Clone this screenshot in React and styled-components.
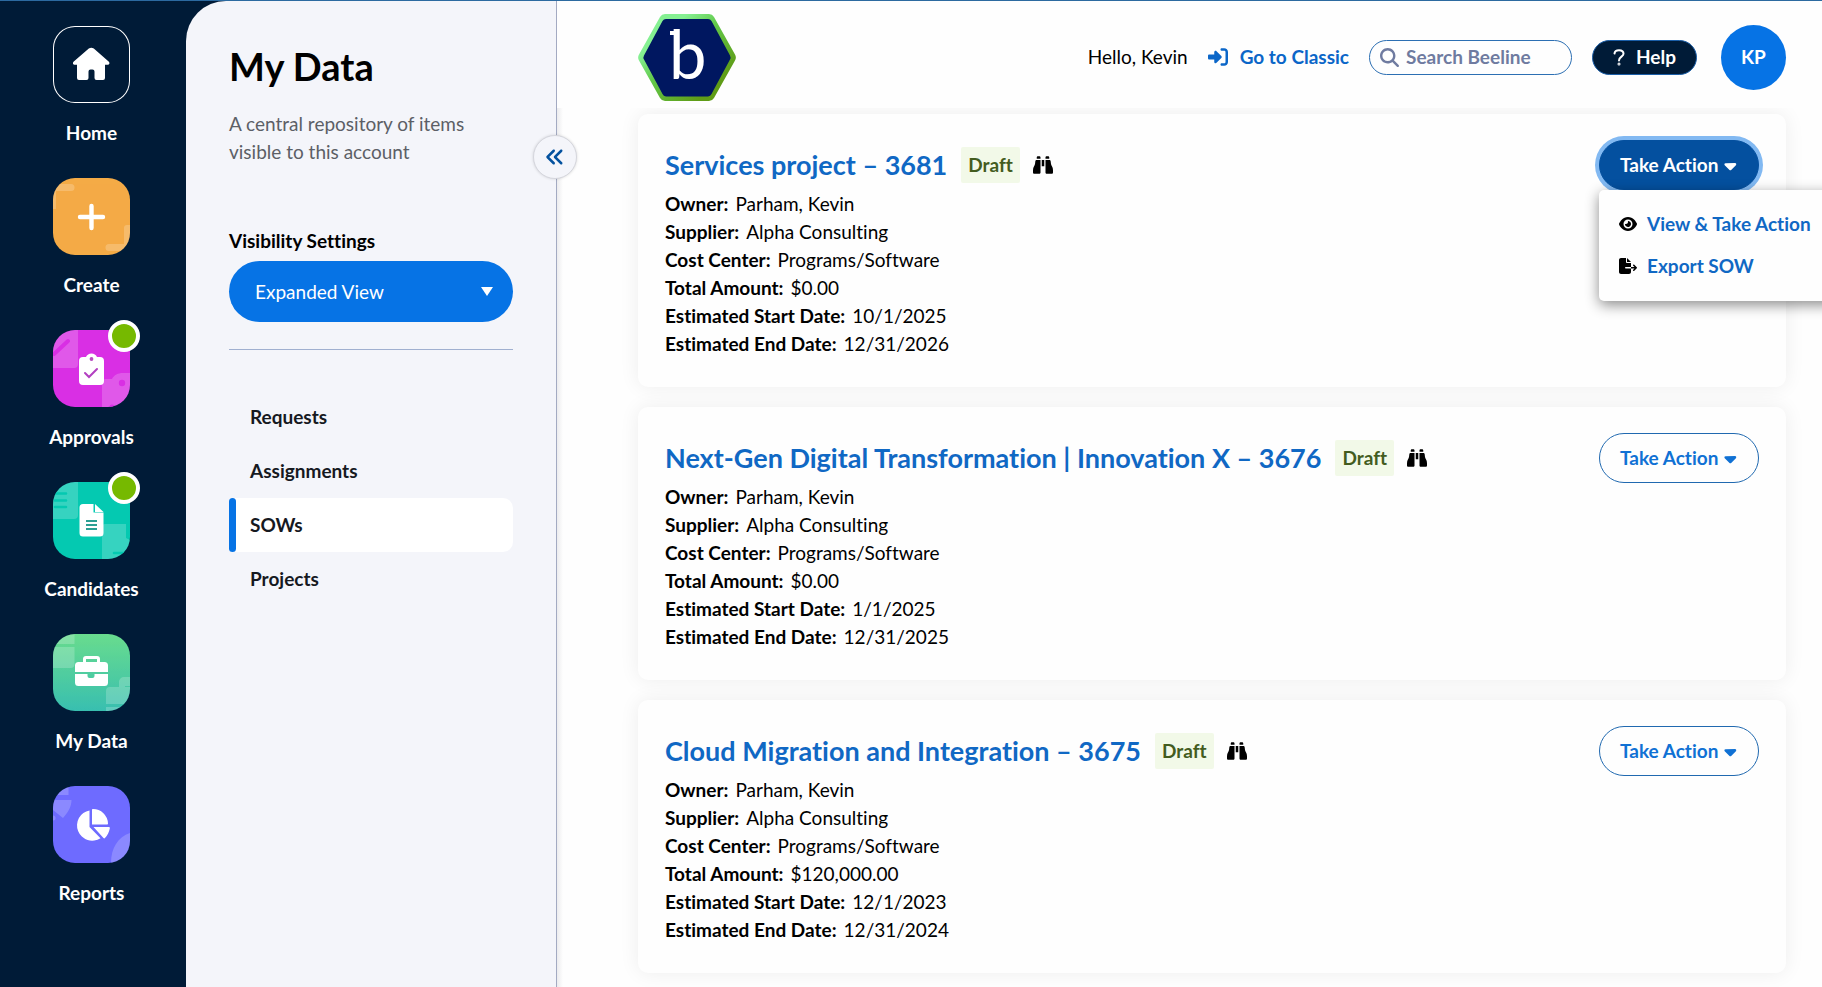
import React from 'react'
import styled, { createGlobalStyle, css } from 'styled-components'
import {
    FaAnglesLeft,
    FaBinoculars,
    FaCaretDown,
    FaEye,
    FaFileExport,
    FaMagnifyingGlass,
    FaRightToBracket,
} from 'react-icons/fa6'

const sections = ['Requests', 'Assignments', 'SOWs', 'Projects']

const sows = [
    {
        id: 3681,
        title: 'Services project – 3681',
        amount: '$0.00',
        start: '10/1/2025',
        end: '12/31/2026',
        open: true,
    },
    {
        id: 3676,
        title: 'Next-Gen Digital Transformation | Innovation X – 3676',
        amount: '$0.00',
        start: '1/1/2025',
        end: '12/31/2025',
    },
    {
        id: 3675,
        title: 'Cloud Migration and Integration – 3675',
        amount: '$120,000.00',
        start: '12/1/2023',
        end: '12/31/2024',
    },
]

const HomeIcon = () => (
    <svg viewBox="0 0 77 77">
        <path fill="#fff" d="M35.8 22.6a4.2 4.2 0 0 1 5 0L55.6 35.4c1.6 1.5.8 3.4-1.2 3.4H52V52a2 2 0 0 1-2 2h-6.500a2 2 0 0 1-2-2v-6.500a2 2 0 0 0-2-2h-2a2 2 0 0 0-2 2V52a2 2 0 0 1-2 2H26a2 2 0 0 1-2-2V38.800h-2c-2 0-2.800-1.900-1.200-3.400z" />
    </svg>
)

const CreateIcon = () => (
    <svg viewBox="0 0 77 77">
        <g fill="#fff" opacity="0.2">
            <path d="M0 6h18a3.500 3.500 0 0 1 0 7H3v18H0z" />
            <path d="M77 47h-3a3 3 0 0 0-3 3v16H56a3.500 3.500 0 0 0 0 7h21z" />
        </g>
        <path d="M38.500 28v22M27 39h23" stroke="#fff" strokeWidth="4.400" strokeLinecap="round" />
    </svg>
)

const ApprovalsIcon = () => (
    <svg viewBox="0 0 77 77">
        <path fill="#fff" opacity="0.2" d="M0 0h25v34a4 4 0 0 1-4 4H0z" />
        <path d="M1 24l14-13" stroke="#d92fe4" strokeWidth="4" strokeLinecap="round" />
        <path fill="#fff" opacity="0.2" d="M49 77V53a4 4 0 0 1 4-4h6c2-4 6-6 11-6h7v34z" />
        <circle cx="69" cy="53" r="3.200" fill="#d92fe4" />
        <circle cx="59" cy="77" r="2.500" fill="#d92fe4" />
        <path fill="#fff" d="M30 27h3a6 6 0 0 1 11 0h3a4 4 0 0 1 4 4v20a4 4 0 0 1-4 4H30a4 4 0 0 1-4-4V31a4 4 0 0 1 4-4z" />
        <circle cx="38.500" cy="29" r="1.900" fill="#b84bc0" />
        <path d="M32 43l4 4 8-8" fill="none" stroke="#b23fc0" strokeWidth="2" strokeLinecap="round" />
    </svg>
)

const CandidatesIcon = () => (
    <svg viewBox="0 0 77 77">
        <path fill="#fff" opacity="0.2" d="M0 0h25v33a4 4 0 0 1-4 4H0z" />
        <path d="M2 11.500h11M2 18.500h11M2 25h11" stroke="#04c9b1" strokeWidth="2.600" strokeLinecap="round" />
        <path fill="#fff" opacity="0.2" d="M49 77V45a3 3 0 0 1 3-3h21v14l4 2v19z" />
        <path d="M61 71h12" stroke="#04c9b1" strokeWidth="2.600" strokeLinecap="round" />
        <path fill="#fff" d="M30 22h10.500v8.500h10V51a3.500 3.500 0 0 1-3.500 3.500H30a3.500 3.500 0 0 1-3.500-3.500V25.500A3.500 3.500 0 0 1 30 22z" />
        <path fill="#fff" d="M42 22l8.500 8H42z" />
        <path d="M33 39h11M33 43h11M33 47h11" stroke="#2b9f94" strokeWidth="1.800" />
    </svg>
)

const MyDataIcon = () => (
    <svg viewBox="0 0 77 77">
        <g fill="#fff" opacity="0.2">
            <path d="M0 0h21.500v10H0zM0 13h21.500v17a4 4 0 0 1-4 4H0z" />
            <path d="M53 70V57a4 4 0 0 1 4-4h9v-5a5 5 0 0 1 5-5h6v9h-5v1h5v17zM53 73h24v4H53z" />
        </g>
        <path fill="#fff" fillRule="evenodd" d="M30 28v-3a3 3 0 0 1 3-3h11a3 3 0 0 1 3 3v3h4.500a3.500 3.500 0 0 1 3.500 3.500V38H22v-6.500a3.500 3.500 0 0 1 3.500-3.500zM33 28h11v-3H33z" />
        <path fill="#fff" d="M22 40h12.500v2a2 2 0 0 0 2 2h3a2 2 0 0 0 2-2v-2H55v8.500a3.500 3.500 0 0 1-3.500 3.500h-26a3.500 3.500 0 0 1-3.500-3.500z" />
    </svg>
)

const ReportsIcon = () => (
    <svg viewBox="0 0 77 77">
        <g fill="#fff" opacity="0.2">
            <path d="M0 0h15.500v9H0zM0 14h18.500c0 7-4 13-8.500 18L0 24z" />
            <circle cx="0" cy="32" r="2.500" />
            <path d="M77 47v30H58c0-15 7-26 19-30z" />
        </g>
        <path fill="#fff" d="M36.500 24.500v16.500l11 11.200A15.200 15.200 0 1 1 36.500 24.500z" />
        <path fill="#fff" d="M39 24c0-.6.400-1 1-1a15 15 0 0 1 15 14.500c0 .6-.4 1-1 1H39z" />
        <path fill="#fff" d="M40.500 41H55.800c.8 0 1.200.6 1 1.400-.8 3.600-2.400 7-4.800 9.600-.5.600-1 .6-1.500 0z" />
    </svg>
)

const navItems = [
    { label: 'Home', icon: HomeIcon, fill: 'transparent', outlined: true },
    { label: 'Create', icon: CreateIcon, fill: '#f4ab46' },
    { label: 'Approvals', icon: ApprovalsIcon, fill: '#d92fe4', alert: true },
    { label: 'Candidates', icon: CandidatesIcon, fill: '#04c9b1', alert: true },
    { label: 'My Data', icon: MyDataIcon, fill: 'linear-gradient(#69dc8e, #39bfb0)' },
    { label: 'Reports', icon: ReportsIcon, fill: '#6e6cff' },
]

const BeelineLogo = () => (
    <svg width="98" height="87" viewBox="0 0 98 87" role="img" aria-label="Beeline">
        <defs>
            <linearGradient id="rim" x1="0" y1="0" x2="1" y2="1">
                <stop offset="0.250" stopColor="#85f092" />
                <stop offset="0.450" stopColor="#62c94a" />
                <stop offset="0.800" stopColor="#5f9c17" />
            </linearGradient>
        </defs>
        <path fill="url(#rim)" d="M27 0h44a6 6 0 0 1 5 3l21 37.500a6 6 0 0 1 0 6L76 84a6 6 0 0 1-5 3H27a6 6 0 0 1-5-3L1 46.500a6 6 0 0 1 0-6L22 3a6 6 0 0 1 5-3z" />
        <path fill="#001760" d="M28 5h42a4 4 0 0 1 3.500 2l18.500 34.500a4 4 0 0 1 0 4L73.500 80a4 4 0 0 1-3.500 2.500H28a4 4 0 0 1-3.500-2.500L6 45.500a4 4 0 0 1 0-4L24.500 7A4 4 0 0 1 28 5z" />
        <rect x="32" y="17" width="7" height="4" fill="#fff" />
        <LogoLetter x="31" y="65">b</LogoLetter>
    </svg>
)

const SowCard = ({ sow }) => (
    <Card>
        <CardTop>
            <CardTitle href="#">{sow.title}</CardTitle>
            <Status>Draft</Status>
            <IconButton aria-label="Preview"><FaBinoculars size={20} /></IconButton>
            <ActionWrap>
                <ActionButton $open={sow.open} aria-expanded={!!sow.open}>
                    Take Action <FaCaretDown size={19} />
                </ActionButton>
                {sow.open && (
                    <Menu>
                        <MenuLink href="#"><FaEye size={18} />View &amp; Take Action</MenuLink>
                        <MenuLink href="#"><FaFileExport size={18} />Export SOW</MenuLink>
                    </Menu>
                )}
            </ActionWrap>
        </CardTop>
        <Details>
            <Detail><dt>Owner:</dt><dd>Parham, Kevin</dd></Detail>
            <Detail><dt>Supplier:</dt><dd>Alpha Consulting</dd></Detail>
            <Detail><dt>Cost Center:</dt><dd>Programs/Software</dd></Detail>
            <Detail><dt>Total Amount:</dt><dd>{sow.amount}</dd></Detail>
            <Detail><dt>Estimated Start Date:</dt><dd>{sow.start}</dd></Detail>
            <Detail><dt>Estimated End Date:</dt><dd>{sow.end}</dd></Detail>
        </Details>
    </Card>
)

const App = () => {
    return (
        <>
            <GlobalStyle />
            <Container>
                <NavRail>
                    {navItems.map(({ label, icon: Icon, fill, outlined, alert }) => (
                        <NavItem href="#" key={label}>
                            <TileWrap>
                                <Tile $fill={fill} $outlined={outlined}><Icon /></Tile>
                                {alert && <Dot />}
                            </TileWrap>
                            {label}
                        </NavItem>
                    ))}
                </NavRail>
                <Sidebar>
                    <Heading>My Data</Heading>
                    <Intro>A central repository of items visible to this account</Intro>
                    <SettingLabel htmlFor="visibility">Visibility Settings</SettingLabel>
                    <SelectWrap>
                        <Select id="visibility" defaultValue="expanded">
                            <option value="expanded">Expanded View</option>
                        </Select>
                        <Arrow viewBox="0 0 12 9"><path d="M0 0h12L6 9z" /></Arrow>
                    </SelectWrap>
                    <Divider />
                    <SectionList>
                        {sections.map((name) => (
                            <SectionLink href="#" key={name} $active={name === 'SOWs'}>{name}</SectionLink>
                        ))}
                    </SectionList>
                    <Collapse aria-label="Collapse panel"><FaAnglesLeft size={20} /></Collapse>
                </Sidebar>
                <Main>
                    <Header>
                        <BeelineLogo />
                        <Tools>
                            <span>Hello, Kevin</span>
                            <ClassicLink href="#"><FaRightToBracket size={20} />Go to Classic</ClassicLink>
                            <Search>
                                <FaMagnifyingGlass size={19} />
                                <SearchInput aria-label="Search Beeline" placeholder="Search Beeline" />
                            </Search>
                            <HelpButton>
                                <QuestionIcon viewBox="0 0 12 17">
                                    <path d="M1.500 4.500C1.800 2.300 3.500 1.200 6 1.200c2.700 0 4.500 1.300 4.500 3.500C10.500 7.600 6 7.800 6 11.500" />
                                    <circle cx="6" cy="15" r="0.500" />
                                </QuestionIcon>
                                Help
                            </HelpButton>
                            <Avatar>KP</Avatar>
                        </Tools>
                    </Header>
                    <Cards>
                        {sows.map((sow) => <SowCard key={sow.id} sow={sow} />)}
                    </Cards>
                </Main>
            </Container>
        </>
    )
}

export default App

const GlobalStyle = createGlobalStyle`
    * {
        box-sizing: border-box;
    }
    body {
        margin: 0;
        background: #fefefe;
        color: #000;
        font-family: Lato, sans-serif;
        font-size: 19px;
        line-height: 28px;
        font-variant-ligatures: none;
    }
    button, input, select {
        font: inherit;
    }
    a {
        text-decoration: none;
    }
`
const Container = styled.div`
    display: flex;
    height: 100vh;
    overflow: hidden;
    border-top: 1px solid #2c6aa0;
    background: linear-gradient(90deg, #001b37 300px, #fefefe 300px);
`
const NavRail = styled.nav`
    width: 186px;
    flex-shrink: 0;
    display: flex;
    flex-direction: column;
    gap: 31px;
    padding: 25px 3px 0 0;
`
const NavItem = styled.a`
    display: flex;
    flex-direction: column;
    align-items: center;
    gap: 16px;
    color: #fff;
    font-weight: 700;
`
const TileWrap = styled.div`
    position: relative;
`
const Tile = styled.div`
    width: 77px;
    height: 77px;
    border-radius: 22px;
    overflow: hidden;
    background: ${(props) => props.$fill};
    box-shadow: ${(props) => (props.$outlined ? 'inset 0 0 0 1px #fff' : 'none')};
    svg {
        display: block;
    }
`
const Dot = styled.span`
    position: absolute;
    top: -10px;
    right: -10px;
    width: 32px;
    height: 32px;
    border: 4px solid #fff;
    border-radius: 50%;
    background: #76b900;
`
const Sidebar = styled.aside`
    position: relative;
    z-index: 2;
    width: 371px;
    flex-shrink: 0;
    padding: 41px 43px 0;
    border-right: 1px solid #a3aac2;
    border-top-left-radius: 40px;
    background: #f4f5fa;
`
const Heading = styled.h1`
    margin: 0;
    font-size: 38px;
    line-height: 48px;
    font-weight: 700;
`
const Intro = styled.p`
    margin: 20px 0 61px;
    color: #5c5f66;
`
const SettingLabel = styled.label`
    display: block;
    margin-bottom: 6px;
    font-weight: 700;
`
const SelectWrap = styled.div`
    display: grid;
    align-items: center;
    > * {
        grid-area: 1 / 1;
    }
`
const Select = styled.select`
    appearance: none;
    width: 100%;
    height: 61px;
    padding: 0 26px;
    border: none;
    border-radius: 31px;
    background: #0673e5;
    color: #fff;
`
const Arrow = styled.svg`
    width: 12px;
    height: 9px;
    margin-right: 20px;
    justify-self: end;
    fill: #fff;
    pointer-events: none;
`
const Divider = styled.hr`
    height: 1px;
    margin: 27px 0 40px;
    border: none;
    background: #a0b0d0;
`
const SectionList = styled.nav`
    display: flex;
    flex-direction: column;
`
const SectionLink = styled.a`
    display: flex;
    align-items: center;
    gap: 14px;
    height: 54px;
    border-radius: 4px 10px 10px 4px;
    color: #16191f;
    font-weight: 700;
    background: ${(props) => (props.$active ? '#fff' : 'transparent')};
    &::before {
        content: '';
        width: 7px;
        height: 100%;
        border-radius: 4px;
        background: ${(props) => (props.$active ? '#0673e5' : 'transparent')};
    }
`
const Collapse = styled.button`
    position: absolute;
    top: 134px;
    right: -21px;
    width: 44px;
    height: 44px;
    display: flex;
    align-items: center;
    justify-content: center;
    padding: 0;
    border: 1px solid #d5d6dd;
    border-radius: 50%;
    background: #f4f5fa;
    color: #04529f;
    box-shadow: 0 0 3px rgba(0, 0, 0, 0.15);
`
const Main = styled.main`
    flex: 1;
    min-width: 0;
    display: flex;
    flex-direction: column;
    background: #fefefe;
`
const Header = styled.header`
    position: relative;
    z-index: 1;
    flex-shrink: 0;
    display: flex;
    align-items: center;
    justify-content: space-between;
    height: 107px;
    padding: 5px 36px 0 81px;
    background: #fefefe;
`
const LogoLetter = styled.text`
    fill: #fff;
    font-family: Lato, sans-serif;
    font-size: 67px;
`
const Tools = styled.div`
    display: flex;
    align-items: center;
    gap: 20px;
`
const ClassicLink = styled.a`
    display: flex;
    align-items: center;
    gap: 12px;
    color: #0b66c8;
    font-weight: 700;
`
const Search = styled.label`
    display: flex;
    align-items: center;
    gap: 7px;
    width: 203px;
    height: 35px;
    padding: 0 10px;
    border: 1px solid #2c6fb3;
    border-radius: 18px;
    color: #6f7ba0;
    svg {
        flex-shrink: 0;
    }
`
const SearchInput = styled.input`
    min-width: 0;
    flex: 1;
    padding: 0;
    border: none;
    outline: none;
    background: none;
    font-weight: 700;
    &::placeholder {
        color: #6f7ba0;
        opacity: 1;
    }
`
const HelpButton = styled.button`
    display: flex;
    align-items: center;
    justify-content: center;
    gap: 11px;
    width: 105px;
    height: 35px;
    padding: 0;
    border: 1px solid #1a5ea8;
    border-radius: 18px;
    background: #001b37;
    color: #fff;
    font-weight: 700;
`
const QuestionIcon = styled.svg`
    width: 12px;
    height: 17px;
    fill: none;
    stroke: #fff;
    stroke-width: 2;
    stroke-linecap: round;
`
const Avatar = styled.button`
    width: 65px;
    height: 65px;
    margin-left: 4px;
    padding: 0;
    border: none;
    border-radius: 50%;
    background: #0673e5;
    color: #fff;
    font-weight: 700;
`
const Cards = styled.div`
    display: flex;
    flex-direction: column;
    gap: 20px;
    padding: 6px 36px 20px 81px;
    background: linear-gradient(90deg, #ececee, #fefefe 6px);
`
const Card = styled.article`
    padding: 26px 27px 29px;
    border-radius: 10px;
    background: #fefefe;
    box-shadow: 0 0 20px rgba(0, 0, 0, 0.07);
`
const CardTop = styled.div`
    display: flex;
    align-items: center;
    height: 50px;
`
const CardTitle = styled.a`
    margin-right: 14px;
    color: #1068c4;
    font-size: 27px;
    line-height: 36px;
    font-weight: 700;
`
const Status = styled.span`
    padding: 4px 7px;
    border-radius: 2px;
    background: #f2f9e8;
    color: #435c1e;
    font-weight: 700;
`
const IconButton = styled.button`
    display: flex;
    margin-left: 13px;
    padding: 0;
    border: none;
    background: none;
    color: #000;
`
const ActionWrap = styled.div`
    position: relative;
    z-index: 1;
    margin-left: auto;
`
const ActionButton = styled.button`
    display: flex;
    align-items: center;
    gap: 5px;
    width: 160px;
    height: 50px;
    padding: 0 20px;
    white-space: nowrap;
    border: 1px solid #2069b0;
    border-radius: 25px;
    background: #fefefe;
    color: #1071d4;
    font-weight: 700;
    ${(props) => props.$open && css`
        border-color: #04509f;
        background: #04509f;
        color: #fff;
        box-shadow: 0 0 0 4px #82b9f2;
    `}
`
const Menu = styled.div`
    position: absolute;
    top: 50px;
    left: 0;
    width: 240px;
    display: flex;
    flex-direction: column;
    gap: 14px;
    padding: 20px 20px 21px;
    border-radius: 5px;
    background: #fefefe;
    box-shadow: 0 4px 14px rgba(0, 0, 0, 0.45);
`
const MenuLink = styled.a`
    display: flex;
    align-items: center;
    gap: 10px;
    white-space: nowrap;
    color: #1068c4;
    font-weight: 700;
    svg {
        color: #000;
    }
`
const Details = styled.dl`
    margin: 0;
`
const Detail = styled.div`
    display: flex;
    gap: 7px;
    dt {
        font-weight: 700;
    }
    dd {
        margin: 0;
    }
`
